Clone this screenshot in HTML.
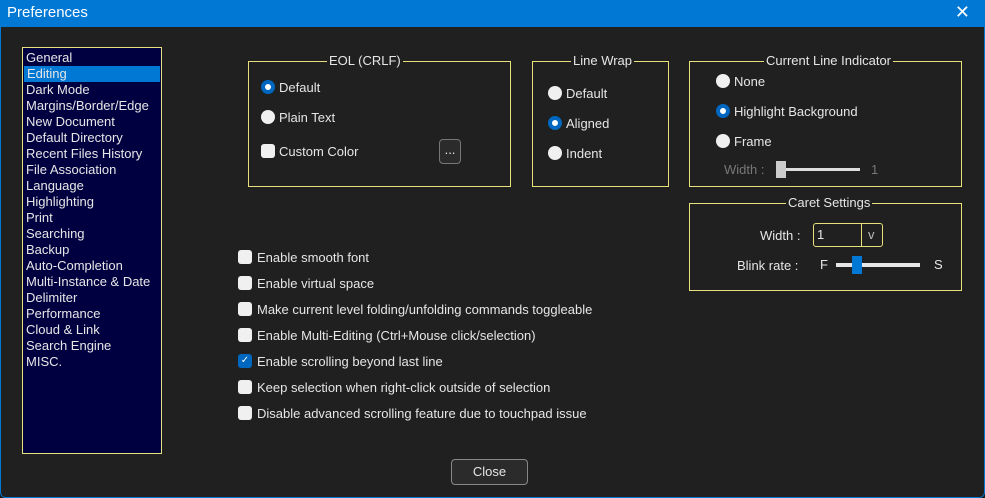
<!DOCTYPE html><html><head><style>
*{margin:0;padding:0;box-sizing:border-box}
body{width:985px;height:498px;background:#1a1a1a;font-family:"Liberation Sans",sans-serif;font-size:13px;color:#e6e6e6;position:relative;overflow:hidden}
.win{position:absolute;left:0;top:0;width:985px;height:498px;background:#202020;box-shadow:inset 1px 0 0 #0078d4,inset -1px 0 0 #0078d4,inset 0 -1px 0 #0078d4;border-radius:0 0 6px 6px}
.title{position:absolute;left:0;top:0;width:985px;height:27px;background:#0078d4;color:#fff;font-size:15px;padding:4px 0 0 7px}
.x{position:absolute;right:15px;top:2px;font-size:18px;color:#fff}
.abs{position:absolute}
.list{left:22px;top:47px;width:140px;height:407px;background:#000040;border:1px solid #e8e07a;padding-top:2px}
.list div{height:16px;line-height:16px;padding-left:3px;white-space:nowrap}
.list .sel{background:#0078d4;margin:0 1px}
.grp{border:1px solid #e8e07a}
.lg{position:absolute;top:-8px;background:#202020;padding:0 2px;line-height:14px;white-space:nowrap}
.rad{position:absolute;width:14px;height:14px;border-radius:50%;background:#f0f0f0}
.rad.on{background:#fff;border:4px solid #0067c0}
.cb{position:absolute;width:14px;height:14px;border-radius:3px;background:#f0f0f0}
.t{position:absolute;white-space:nowrap;line-height:14px}
</style></head><body><div class="win">
<div class="title">Preferences<span class="x">✕</span></div>
<div class="abs list">
<div>General</div><div class="sel">Editing</div><div>Dark Mode</div><div>Margins/Border/Edge</div><div>New Document</div><div>Default Directory</div><div>Recent Files History</div><div>File Association</div><div>Language</div><div>Highlighting</div><div>Print</div><div>Searching</div><div>Backup</div><div>Auto-Completion</div><div>Multi-Instance &amp; Date</div><div>Delimiter</div><div>Performance</div><div>Cloud &amp; Link</div><div>Search Engine</div><div>MISC.</div>
</div>

<div class="abs grp" style="left:248px;top:61px;width:263px;height:126px"><span class="lg" style="left:78px">EOL (CRLF)</span>
<div class="rad on" style="left:12px;top:18px"></div><span class="t" style="left:30px;top:19px">Default</span>
<div class="rad" style="left:12px;top:48px"></div><span class="t" style="left:30px;top:49px">Plain Text</span>
<div class="cb" style="left:12px;top:82px"></div><span class="t" style="left:30px;top:83px">Custom Color</span>
<div class="abs" style="left:190px;top:77px;width:22px;height:25px;border:1px solid #777;border-radius:4px;background:#2b2b2b;text-align:center;line-height:20px">...</div>
</div>

<div class="abs grp" style="left:532px;top:61px;width:137px;height:126px"><span class="lg" style="left:38px">Line Wrap</span>
<div class="rad" style="left:15px;top:24px"></div><span class="t" style="left:33px;top:25px">Default</span>
<div class="rad on" style="left:15px;top:54px"></div><span class="t" style="left:33px;top:55px">Aligned</span>
<div class="rad" style="left:15px;top:84px"></div><span class="t" style="left:33px;top:85px">Indent</span>
</div>

<div class="abs grp" style="left:689px;top:61px;width:273px;height:126px"><span class="lg" style="left:74px">Current Line Indicator</span>
<div class="rad" style="left:26px;top:12px"></div><span class="t" style="left:44px;top:13px">None</span>
<div class="rad on" style="left:26px;top:42px"></div><span class="t" style="left:44px;top:43px">Highlight Background</span>
<div class="rad" style="left:26px;top:72px"></div><span class="t" style="left:44px;top:73px">Frame</span>
<span class="t" style="left:34px;top:101px;color:#777">Width :</span>
<div class="abs" style="left:88px;top:106px;width:82px;height:3px;background:#ddd"></div>
<div class="abs" style="left:86px;top:99px;width:10px;height:17px;background:#ccc"></div>
<span class="t" style="left:181px;top:101px;color:#777">1</span>
</div>

<div class="abs grp" style="left:689px;top:203px;width:273px;height:88px"><span class="lg" style="left:96px">Caret Settings</span>
<span class="t" style="left:70px;top:25px">Width :</span>
<div class="abs" style="left:123px;top:19px;width:70px;height:24px;border:1px solid #e8e07a;border-radius:3px"><span class="t" style="left:3px;top:4px">1</span><div class="abs" style="left:47px;top:0;width:1px;height:22px;background:#e8e07a"></div><span class="t" style="left:54px;top:4px;color:#bbb">v</span></div>
<span class="t" style="left:47px;top:55px">Blink rate :</span>
<span class="t" style="left:130px;top:54px">F</span>
<div class="abs" style="left:146px;top:59px;width:84px;height:4px;background:#e6e6e6"></div>
<div class="abs" style="left:162px;top:52px;width:10px;height:18px;background:#0078d4"></div>
<span class="t" style="left:244px;top:54px">S</span>
</div>

<div class="cb" style="left:238px;top:250px"></div><span class="t" style="left:257px;top:251px">Enable smooth font</span>
<div class="cb" style="left:238px;top:276px"></div><span class="t" style="left:257px;top:277px">Enable virtual space</span>
<div class="cb" style="left:238px;top:302px"></div><span class="t" style="left:257px;top:303px">Make current level folding/unfolding commands toggleable</span>
<div class="cb" style="left:238px;top:328px"></div><span class="t" style="left:257px;top:329px">Enable Multi-Editing (Ctrl+Mouse click/selection)</span>
<div class="cb" style="left:238px;top:354px;background:#0067c0;color:#fff;font-size:10px;text-align:center;line-height:14px">✓</div><span class="t" style="left:257px;top:355px">Enable scrolling beyond last line</span>
<div class="cb" style="left:238px;top:380px"></div><span class="t" style="left:257px;top:381px">Keep selection when right-click outside of selection</span>
<div class="cb" style="left:238px;top:406px"></div><span class="t" style="left:257px;top:407px">Disable advanced scrolling feature due to touchpad issue</span>

<div class="abs" style="left:451px;top:459px;width:77px;height:26px;border:1px solid #888;border-radius:4px;background:#2b2b2b;text-align:center;line-height:24px">Close</div>
</div></body></html>
